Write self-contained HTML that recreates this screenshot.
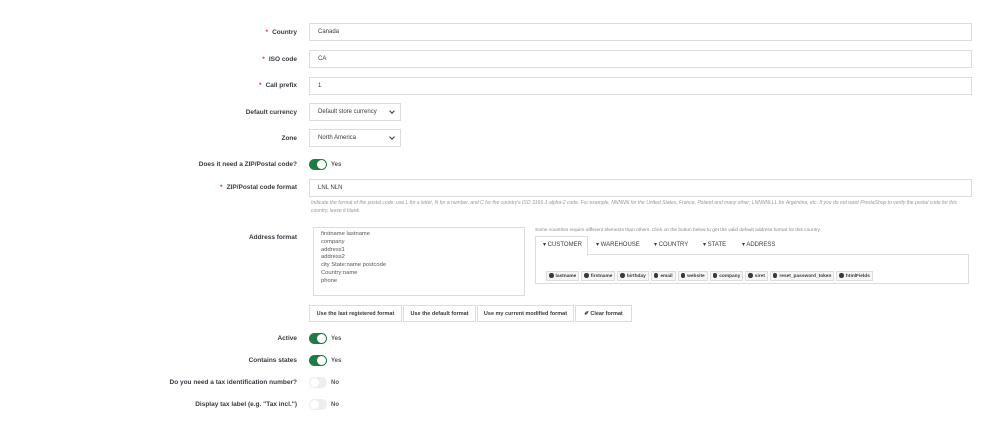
<!DOCTYPE html><html><head><style>
*{box-sizing:border-box;margin:0;padding:0}
body{width:1000px;height:430px;background:#fff;font-family:"Liberation Sans",sans-serif;color:#363a41;position:relative;overflow:hidden}
.a{position:absolute}
.lb{position:absolute;right:703px;font-size:6.5px;font-weight:bold;color:#363a41;white-space:nowrap}
.lb i{color:#e0312b;font-style:normal;margin-right:4px}
.in{position:absolute;left:309px;border:1px solid #dcdcdc;background:#fff;font-size:6px;padding-left:8px;display:flex;align-items:center;height:18px}
.sel{width:92px}
.sel:after{content:"";position:absolute;right:6px;top:5px;width:3px;height:3px;border-right:1.5px solid #363a41;border-bottom:1.5px solid #363a41;transform:rotate(45deg)}
.tg{position:absolute;left:309px;width:18px;height:11px;border-radius:6px;background:#eee}
.tg:after{content:"";position:absolute;left:1px;top:1px;width:9px;height:9px;border-radius:50%;background:#fff}
.tg.on{background:#1f7a45}.tg.on:after{left:8px}
.tl{position:absolute;left:331px;font-size:6px;font-weight:bold;color:#555}
.btn{position:absolute;top:305px;height:17px;border:1px solid #dcdcdc;font-size:5.5px;font-weight:bold;display:flex;align-items:center;justify-content:center}
.tab{position:absolute;top:237px;font-size:6px;color:#363a41}
.pill{display:inline-block;border:1px solid #ddd;background:#f6f6f6;font-size:4.8px;font-weight:bold;padding:1px 2px;margin-right:2px}
.pill:before{content:"";display:inline-block;width:4.5px;height:4.5px;border-radius:50%;background:#363a41;margin-right:2px;vertical-align:-0.5px}
</style></head><body>
<div class="lb" style="top:29px"><i>*</i>Country</div><div class="in" style="top:23px;width:663px">Canada</div>
<div class="lb" style="top:56px"><i>*</i>ISO code</div><div class="in" style="top:50px;width:663px">CA</div>
<div class="lb" style="top:82px"><i>*</i>Call prefix</div><div class="in" style="top:77px;width:663px">1</div>
<div class="lb" style="top:109px">Default currency</div><div class="in sel" style="top:103px">Default store currency</div>
<div class="lb" style="top:135px">Zone</div><div class="in sel" style="top:129px">North America</div>
<div class="lb" style="top:161px">Does it need a ZIP/Postal code?</div><div class="tg on" style="top:159px"></div><div class="tl" style="top:162px">Yes</div>
<div class="lb" style="top:184px"><i>*</i>ZIP/Postal code format</div><div class="in" style="top:179px;width:663px">LNL NLN</div>
<div class="a" style="left:311px;top:199px;width:655px;font-size:5px;font-style:italic;color:#999;line-height:8px">Indicate the format of the postal code: use L for a letter, N for a number, and C for the country's ISO 3166-1 alpha-2 code. For example, NNNNN for the United States, France, Poland and many other; LNNNNLLL for Argentina, etc. If you do not want PrestaShop to verify the postal code for this country, leave it blank.</div>
<div class="lb" style="top:234px">Address format</div>
<div class="a" style="left:313px;top:227px;width:212px;height:69px;border:1px solid #dcdcdc;font-size:5.8px;line-height:7.8px;padding:3px 0 0 7px;color:#555">firstname lastname<br>company<br>address1<br>address2<br>city State:name postcode<br>Country:name<br>phone</div>
<div class="a" style="left:535px;top:228px;font-size:4.8px;color:#888">Some countries require different elements than others. Click on the button below to get the valid default address format for this country.</div>
<div class="a" style="left:535px;top:254px;width:434px;height:30px;border:1px solid #dcdcdc"></div>
<div class="a" style="left:535px;top:236px;width:53px;height:19px;border:1px solid #dcdcdc;border-bottom:none;background:#fff"></div>
<div class="tab" style="left:543px;top:241px">▾ CUSTOMER</div>
<div class="tab" style="left:596px;top:241px">▾ WAREHOUSE</div>
<div class="tab" style="left:654px;top:241px">▾ COUNTRY</div>
<div class="tab" style="left:703px;top:241px">▾ STATE</div>
<div class="tab" style="left:742px;top:241px">▾ ADDRESS</div>
<div class="a" style="left:546px;top:264px;white-space:nowrap"><span class="pill">lastname</span><span class="pill">firstname</span><span class="pill">birthday</span><span class="pill">email</span><span class="pill">website</span><span class="pill">company</span><span class="pill">siret</span><span class="pill">reset_password_token</span><span class="pill">htmlFields</span></div>
<div class="btn" style="left:309px;width:93px">Use the last registered format</div>
<div class="btn" style="left:403px;width:73px">Use the default format</div>
<div class="btn" style="left:477px;width:97px">Use my current modified format</div>
<div class="btn" style="left:575px;width:57px">✐ Clear format</div>
<div class="lb" style="top:335px">Active</div><div class="tg on" style="top:333px"></div><div class="tl" style="top:336px">Yes</div>
<div class="lb" style="top:357px">Contains states</div><div class="tg on" style="top:355px"></div><div class="tl" style="top:358px">Yes</div>
<div class="lb" style="top:379px">Do you need a tax identification number?</div><div class="tg" style="top:377px"></div><div class="tl" style="top:380px">No</div>
<div class="lb" style="top:401px">Display tax label (e.g. "Tax incl.")</div><div class="tg" style="top:399px"></div><div class="tl" style="top:402px">No</div>
</body></html>
